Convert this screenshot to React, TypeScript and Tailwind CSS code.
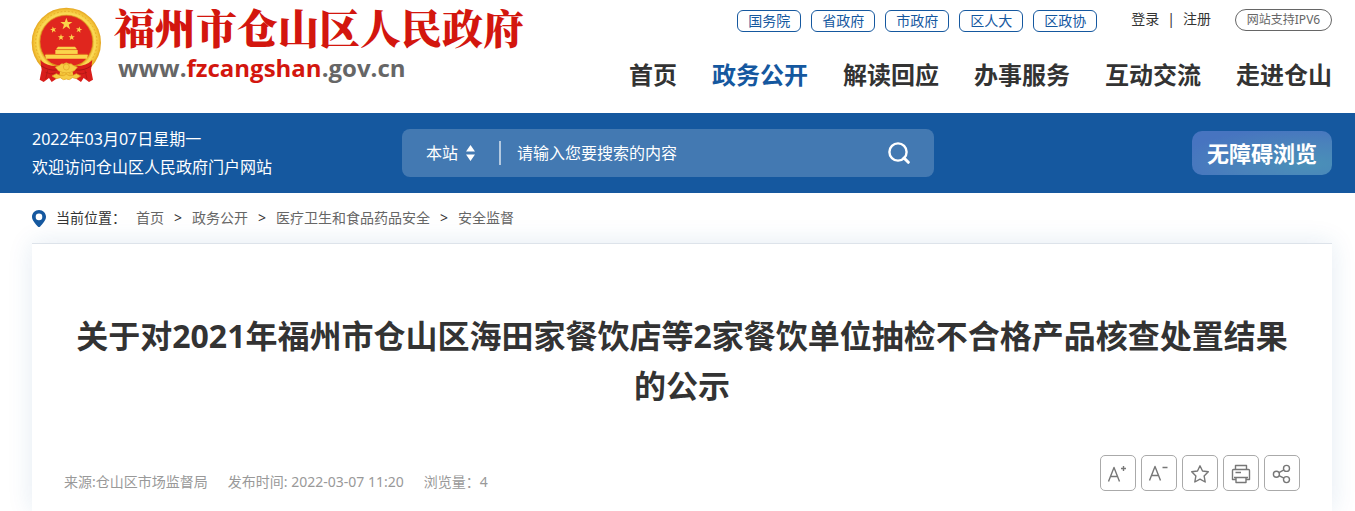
import type { ReactNode } from "react";

const orgLinks = ["国务院", "省政府", "市政府", "区人大", "区政协"];

const navItems = [
  { label: "首页" },
  { label: "政务公开", active: true },
  { label: "解读回应" },
  { label: "办事服务" },
  { label: "互动交流" },
  { label: "走进仓山" },
];

const crumbs = ["首页", "政务公开", "医疗卫生和食品药品安全", "安全监督"];

const STAR = "M0 -10 L2.4 -3.2 L9.5 -3.1 L3.8 1.2 L5.9 8.1 L0 4 L-5.9 8.1 L-3.8 1.2 L-9.5 -3.1 L-2.4 -3.2 Z";

function Emblem() {
  return (
    <svg viewBox="34 22 213 231" className="h-[77px] w-[71px] shrink-0" aria-hidden="true">
      <defs>
        <radialGradient id="gold" cx="140" cy="128" r="104" gradientUnits="userSpaceOnUse">
          <stop offset="0.74" stopColor="#e3a51c" />
          <stop offset="0.82" stopColor="#fbdc58" />
          <stop offset="0.93" stopColor="#f3c236" />
          <stop offset="1" stopColor="#e3a420" />
        </radialGradient>
      </defs>
      <ellipse cx="140" cy="129" rx="104" ry="105" fill="url(#gold)" />
      <ellipse cx="140" cy="128" rx="92" ry="93" fill="none" stroke="#e5ab25" strokeWidth="3" strokeDasharray="5 6" />
      <circle cx="140" cy="126" r="79" fill="#e0261e" stroke="#d8901b" strokeWidth="2" />
      <g fill="#fbd44b">
        <path d={STAR} transform="translate(140 73) scale(1.9)" />
        <path d={STAR} transform="translate(101 90) rotate(-12)" />
        <path d={STAR} transform="translate(178 90) rotate(12)" />
        <path d={STAR} transform="translate(124 113)" />
        <path d={STAR} transform="translate(156 113)" />
        <path d="M115 141 H166 L172 149 H109 Z" />
        <path d="M107 151 H174 V163 H107 Z" />
        <path d="M76 165 H205 L202 177 H79 Z" />
      </g>
      <path d="M110 150 H171 M78 164 H203" stroke="#e79a20" strokeWidth="2" />
      <path d="M94 191 Q140 212 187 191" fill="none" stroke="#e3a51c" strokeWidth="2" />
      {/* ribbons over the lower half of the ring */}
      <path d="M62 181 Q80 199 110 200 L122 212 L118 232 L96 247 L88 235 L72 247 L60 240 L66 210 Z" fill="#d81e1b" />
      <path d="M218 181 Q200 199 170 200 L158 212 L162 232 L184 247 L192 235 L208 247 L220 240 L214 210 Z" fill="#d81e1b" />
      <path d="M64 198 Q86 214 112 211 M216 198 Q194 214 168 211" fill="none" stroke="#a91614" strokeWidth="3" />
      <path d="M78 218 Q92 226 108 220 M202 218 Q188 226 172 220 M84 212 L78 238 M196 212 L202 238" fill="none" stroke="#a91614" strokeWidth="2" />
      <g fill="#f7cd45" stroke="#e0a326" strokeWidth="2">
        <path d="M120 197 Q124 190 132 193 Q140 186 148 193 Q156 190 160 197 L173 203 L164 213 Q140 226 116 213 L107 203 Z" />
        <circle cx="140" cy="202" r="9" />
        <path d="M97 229 L110 222 L122 228 Q132 230 140 224 Q148 230 158 228 L170 222 L183 229 L170 237 L158 234 Q149 244 140 238 Q131 244 122 234 L110 237 Z" />
      </g>
    </svg>
  );
}

function PinIcon() {
  return (
    <svg viewBox="0 0 14 17" className="h-[17px] w-[14px]" aria-hidden="true">
      <path fillRule="evenodd" fill="#15589f" d="M7 0 C3 0 0 3 0 6.8 C0 10.5 3.6 14.2 5.8 16.4 Q7 17.4 8.2 16.4 C10.4 14.2 14 10.5 14 6.8 C14 3 11 0 7 0 Z M7 3.6 A3.3 3.3 0 1 1 7 10.2 A3.3 3.3 0 1 1 7 3.6 Z" />
    </svg>
  );
}

function ToolButton({ label, children }: { label: string; children: ReactNode }) {
  return (
    <button
      type="button"
      aria-label={label}
      className="flex h-9 w-9 items-center justify-center rounded-[5px] border border-[#aaa] bg-white"
    >
      <svg viewBox="0 0 36 36" className="h-9 w-9 shrink-0" fill="none" stroke="#777" strokeWidth="1.4" strokeLinejoin="round">
        {children}
      </svg>
    </button>
  );
}

function Header() {
  return (
    <header className="flex h-[113px] justify-between pr-[23px] pl-[31px]">
      <a href="#" className="flex items-start gap-3 pt-[7px]">
        <Emblem />
        <span className="flex flex-col">
          <span className="font-['Noto_Serif_CJK_SC','Noto_Sans_CJK_SC',serif] text-[41px] leading-10 font-black whitespace-nowrap text-[#d3160e]">
            福州市仓山区人民政府
          </span>
          <span className="pl-1 font-['Open_Sans',sans-serif] text-2xl leading-[42px] font-bold text-[#666]">
            www.<span className="text-[#d3160e]">fzcangshan</span>.gov.cn
          </span>
        </span>
      </a>
      <div className="flex flex-col items-end">
        <div className="flex items-start pt-[9px] text-sm">
          <div className="flex gap-[10px] pt-px">
            {orgLinks.map((org) => (
              <a
                key={org}
                href="#"
                className="flex h-[22px] w-16 items-center justify-center rounded-md border border-[#15589f] text-[#15589f]"
              >
                {org}
              </a>
            ))}
          </div>
          <div className="flex gap-2 pl-[34px] text-[#333]">
            <a href="#">登录</a>
            <span>|</span>
            <a href="#">注册</a>
          </div>
          <a
            href="#"
            className="ml-6 flex h-[22px] w-[97px] items-center justify-center rounded-full border border-[#666] text-xs text-[#666]"
          >
            网站支持IPV6
          </a>
        </div>
        <nav className="flex gap-[35px] pt-[27px] text-2xl leading-8 font-bold whitespace-nowrap">
          {navItems.map((item) => (
            <a key={item.label} href="#" className={item.active ? "text-[#15589f]" : "text-[#333]"}>
              {item.label}
            </a>
          ))}
        </nav>
      </div>
    </header>
  );
}

function SearchBar() {
  return (
    <section className="flex h-20 items-center bg-[#15589f] pr-[23px] pl-8 text-white">
      <div className="w-[370px] shrink-0 leading-7">
        <p>2022年03月07日星期一</p>
        <p>欢迎访问仓山区人民政府门户网站</p>
      </div>
      <form className="flex h-12 w-[532px] items-center rounded-lg bg-white/20 px-6">
        <label className="flex items-center gap-2">
          <select aria-label="搜索范围" className="w-8 appearance-none bg-transparent text-white outline-none">
            <option>本站</option>
          </select>
          <svg viewBox="0 0 9 16" className="h-4 w-[9px]" fill="#fff" aria-hidden="true">
            <path d="M4.5 0 L9 6.5 H0 Z M0 9.5 H9 L4.5 16 Z" />
          </svg>
        </label>
        <span className="ml-6 h-6 w-0.5 bg-white/60" />
        <input
          type="text"
          aria-label="搜索"
          placeholder="请输入您要搜索的内容"
          className="ml-4 min-w-0 flex-1 bg-transparent outline-none placeholder:text-white"
        />
        <button type="submit" aria-label="搜索">
          <svg viewBox="0 0 22 22" className="h-[22px] w-[22px]" fill="none" stroke="#fff" aria-hidden="true">
            <circle cx="10" cy="10" r="8.6" strokeWidth="2.4" />
            <path d="M16 16 L20.3 20.3" strokeWidth="3" strokeLinecap="round" />
          </svg>
        </button>
      </form>
      <button
        type="button"
        className="ml-auto h-11 w-[140px] rounded-[10px] bg-[#4774c0] bg-[radial-gradient(ellipse_at_85%_75%,#4a90b8_0%,#4a82bb_45%,#4774c0_80%)] text-[22px] font-bold"
      >
        无障碍浏览
      </button>
    </section>
  );
}

export default function App() {
  return (
    <div className="overflow-hidden bg-white font-['Noto_Sans','Noto_Sans_CJK_SC',sans-serif] text-base text-[#333]">
      <Header />
      <SearchBar />
      <nav aria-label="当前位置" className="flex h-[50px] items-center pl-8 text-sm">
        <PinIcon />
        <span className="pl-[10px]">当前位置：</span>
        <ol className="flex gap-[10px] pl-[10px]">
          {crumbs.map((crumb, i) => (
            <li key={crumb} className="flex gap-[10px]">
              {i > 0 && <span>&gt;</span>}
              <a href="#" className="text-[#666]">
                {crumb}
              </a>
            </li>
          ))}
        </ol>
      </nav>
      <main className="mr-[23px] ml-8 border-t border-[#dde3ea] bg-white px-8 pt-[67px] pb-5 shadow-[0_0_24px_rgba(21,88,159,0.12)]">
        <h1 className="text-center text-[32px] leading-[50px] font-bold">
          关于对2021年福州市仓山区海田家餐饮店等2家餐饮单位抽检不合格产品核查处置结果的公示
        </h1>
        <div className="flex items-end justify-between pt-11">
          <div className="flex gap-5 text-sm leading-[18px] text-[#999]">
            <span>来源:仓山区市场监督局</span>
            <span>发布时间: 2022-03-07 11:20</span>
            <span>浏览量：4</span>
          </div>
          <div className="flex gap-[5px]">
            <ToolButton label="放大字体">
              <path d="M8.5 26.5 L14 12.5 L19.5 26.5 M10.5 21.5 H17.5 M21 13.5 H26 M23.5 11 V16" />
            </ToolButton>
            <ToolButton label="缩小字体">
              <path d="M8.5 25.5 L14 11.5 L19.5 25.5 M10.5 20.5 H17.5 M21.5 12.5 H26.5" />
            </ToolButton>
            <ToolButton label="收藏">
              <path d="M18 10.8 L20.5 16 L26.3 16.8 L22.1 20.9 L23.2 27 L18 24.2 L12.8 27 L13.9 20.9 L9.7 16.8 L15.5 16 Z" />
            </ToolButton>
            <ToolButton label="打印">
              <path d="M12.5 14.5 V10.5 H23.5 V14.5 M12.5 24.5 H9.5 V15.5 Q9.5 14.5 10.5 14.5 H25.5 Q26.5 14.5 26.5 15.5 V24.5 H23.5 M12.5 17.5 H18 M11 22.5 H25 M13 22.5 V27.5 H23 V22.5" />
            </ToolButton>
            <ToolButton label="分享">
              <circle cx="12.4" cy="19.2" r="3" />
              <circle cx="22.5" cy="13.4" r="3" />
              <circle cx="22.5" cy="24.6" r="3" />
              <path d="M15 17.7 L19.9 14.9 M15 20.6 L19.9 23.2" />
            </ToolButton>
          </div>
        </div>
      </main>
    </div>
  );
}
